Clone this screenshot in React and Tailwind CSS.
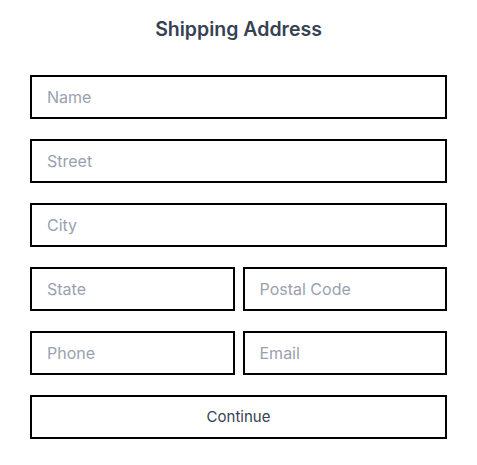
export default function App() {
  const input =
    "h-[44px] w-full border-2 border-black bg-white px-[15px] text-[16px] text-gray-700 placeholder:text-gray-400 outline-none";
  return (
    <div className="min-h-[465px] w-[477px] bg-white font-['Inter',sans-serif]">
      <div className="px-[30px] pt-[15px]">
        <h1 className="text-center text-[19.5px] leading-[28px] font-semibold text-gray-700">
          Shipping Address
        </h1>
        <form className="mt-[32px] flex flex-col gap-[20px]" onSubmit={(e) => e.preventDefault()}>
          <input className={input} placeholder="Name" />
          <input className={input} placeholder="Street" />
          <input className={input} placeholder="City" />
          <div className="flex gap-[8px]">
            <input className={input} placeholder="State" />
            <input className={input} placeholder="Postal Code" />
          </div>
          <div className="flex gap-[8px]">
            <input className={input} placeholder="Phone" />
            <input className={input} placeholder="Email" />
          </div>
          <button className="h-[44px] w-full border-2 border-black bg-white text-[15px] text-gray-700">
            Continue
          </button>
        </form>
      </div>
    </div>
  );
}
